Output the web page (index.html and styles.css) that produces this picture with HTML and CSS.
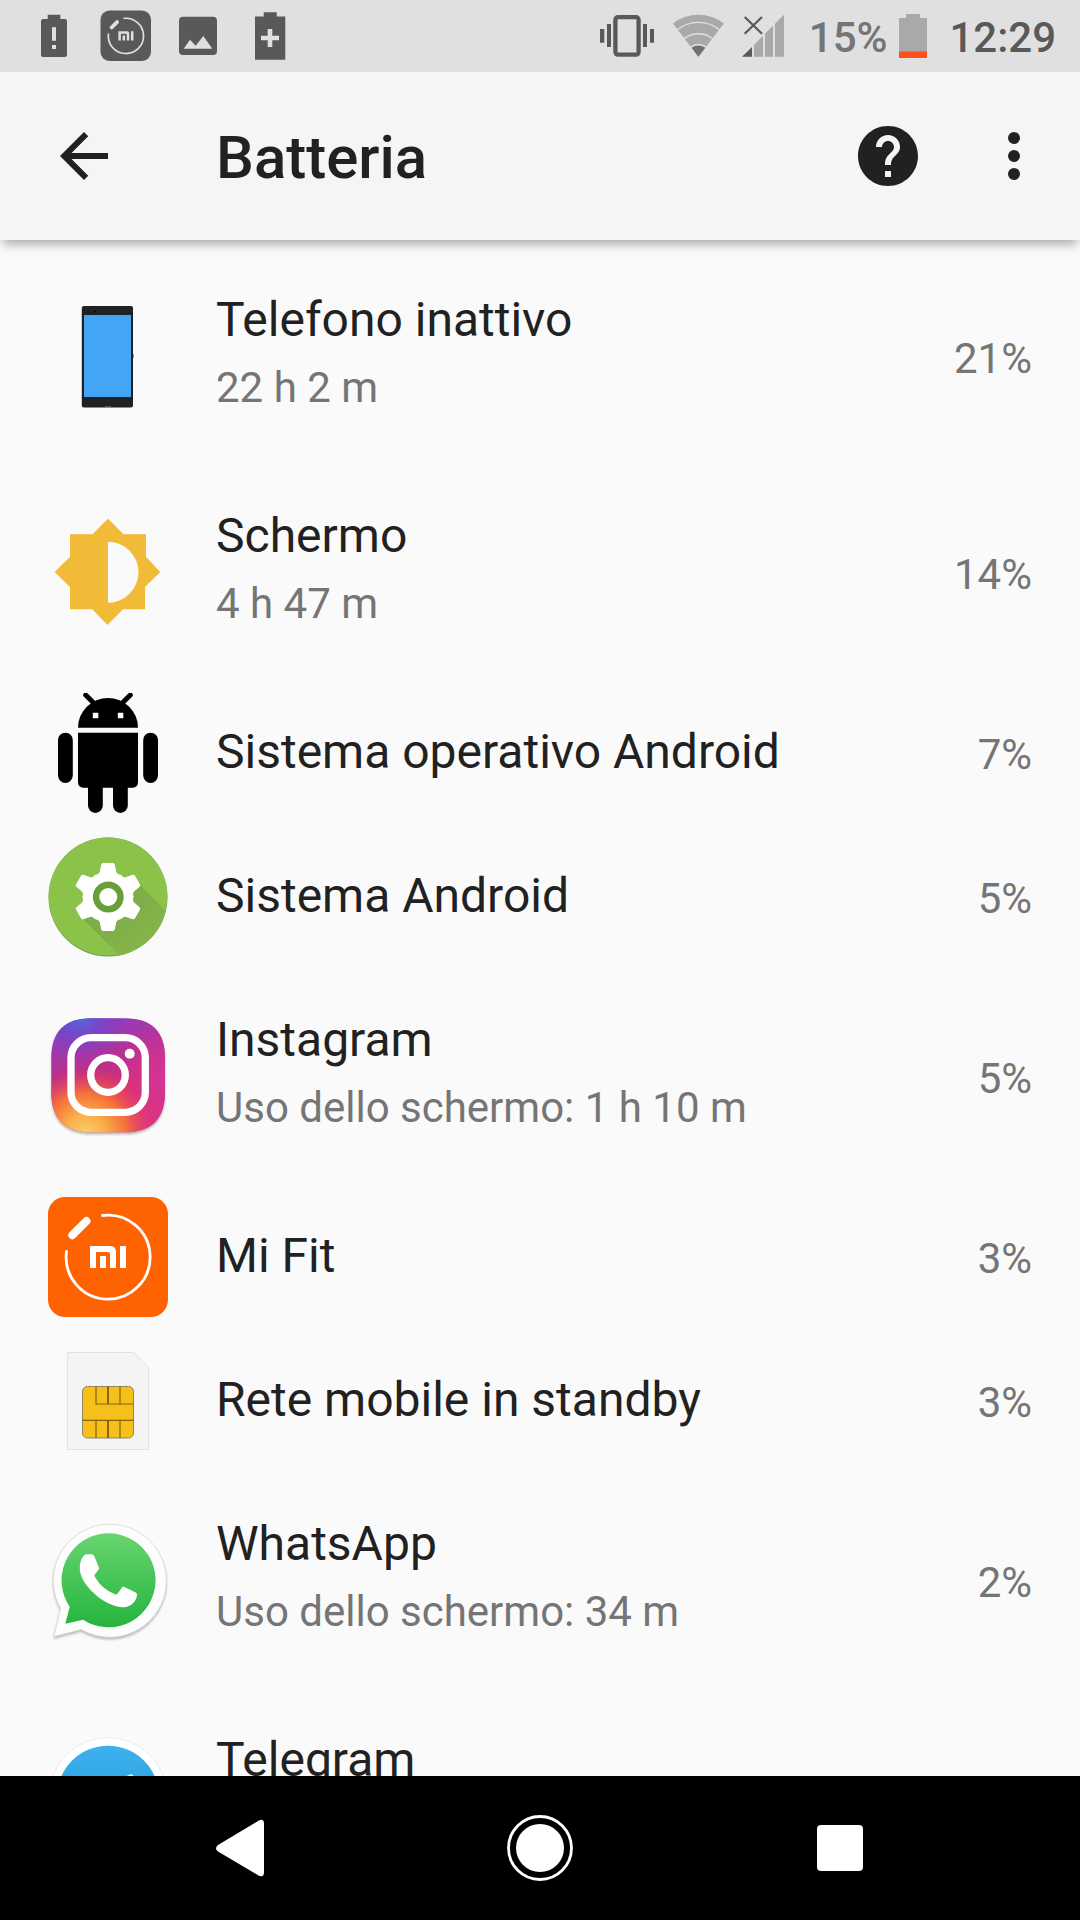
FILE: index.html
```html
<!DOCTYPE html>
<html lang="it">
<head>
    <meta charset="UTF-8">
    <meta name="viewport" content="width=device-width, initial-scale=1.0">
    <title>Batteria</title>
    <link rel="stylesheet" href="styles.css">
</head>
<body>
<div class="status-bar">
    <div class="notifications">
        <svg width="72" height="72" viewBox="0 0 72 72">
            <path fill="#595959" d="M29.7 14.7h12.6V19H47a2 2 0 0 1 2 2v34a2 2 0 0 1-2 2H25a2 2 0 0 1-2-2V21a2 2 0 0 1 2-2h4.7z"/>
            <path fill="#e0e0e0" d="M34 27.3h4v13.4h-4zM34 45h4v4h-4z"/>
        </svg>
        <svg width="72" height="72" viewBox="0 0 72 72">
            <rect x="10.5" y="10.5" width="50.5" height="50.5" rx="9" fill="#595959"/>
            <g transform="translate(10.7 10.7) scale(.42)">
                <path d="M54.3 18.4A42 42 0 1 1 18.4 54.3" fill="none" stroke="#e0e0e0" stroke-width="4"/>
                <path d="M26 40L39 27" stroke="#e0e0e0" stroke-width="9" stroke-linecap="round"/>
                <path fill="#e0e0e0" d="M42 49h21q5 0 5 5v17h-6V57q0-2-2-2H48v16h-6zM52 59h6v12h-6zM72 49h6v22h-6z"/>
            </g>
        </svg>
        <svg width="72" height="72" viewBox="0 0 72 72">
            <rect x="17" y="16.7" width="38" height="38.3" rx="4" fill="#595959"/>
            <path fill="#e0e0e0" d="M21.7 48.8L28 39.7l5.7 6L41.3 36l9 12.8z"/>
        </svg>
        <svg width="72" height="72" viewBox="0 0 72 72">
            <path fill="#595959" d="M21 16.5h8.7v-4.2h13v4.2h8.6v43.2H21z"/>
            <path stroke="#e0e0e0" stroke-width="4.6" d="M27 38h18M36 29v18"/>
        </svg>
    </div>
    <div class="system">
        <div class="signals">
            <svg width="60" height="72" viewBox="0 0 60 72">
                <rect x="18.4" y="17.2" width="23.2" height="37.4" rx="2.5" fill="none" stroke="#595959" stroke-width="4.3"/>
                <path fill="#595959" d="M3 29h4.3v13.7H3zM10 24h4v23h-4zM46 24h4v23h-4zM53 29h4v13.7h-4z"/>
            </svg>
            <svg width="60" height="72" viewBox="0 0 60 72">
                <path fill="#a9a9a9" d="M29.4 56.8L3.9 23.4a42.3 42.3 0 0 1 51 0z"/>
                <path fill="#707070" d="M29.4 56.8l-6.8-9a11.5 11.5 0 0 1 13.6 0z"/>
                <g fill="none" stroke="#e0e0e0" stroke-width="1.4">
                    <path d="M8 30a34 34 0 0 1 42.8 0"/>
                    <path d="M15 38.8a23 23 0 0 1 28.8 0"/>
                    <path d="M21.6 47.3a12.5 12.5 0 0 1 15.6 0"/>
                </g>
            </svg>
            <svg width="60" height="72" viewBox="0 0 60 72">
                <path fill="#595959" d="M1 56.8l10-9.8v9.8z"/>
                <path fill="#a9a9a9" d="M13 56.8V45l9-9.3v21.1zM24 56.8V33.7l8-7.9v31zM34 56.8v-33l9-9v42z"/>
                <path stroke="#595959" stroke-width="2.2" d="M3.7 17L21 33.8M21 17L3.7 33.8"/>
            </svg>
        </div>
        <span class="level">15%</span>
        <svg width="36" height="72" viewBox="0 0 36 72">
            <path fill="#a9a9a9" d="M4 18h7v-4h14v4h7v34H4z"/>
            <path fill="#fa5019" d="M4 51.5h28V58H4z"/>
        </svg>
        <time class="clock" datetime="12:29">12:29</time>
    </div>
</div>

<header class="toolbar">
    <button class="icon-btn" type="button" aria-label="Indietro">
        <svg width="72" height="72" viewBox="0 0 24 24"><path d="M20 11H7.83l5.59-5.59L12 4l-8 8 8 8 1.41-1.41L7.83 13H20z"/></svg>
    </button>
    <h1>Batteria</h1>
    <button class="icon-btn" type="button" aria-label="Guida">
        <svg width="72" height="72" viewBox="0 0 24 24"><path d="M12 2C6.48 2 2 6.48 2 12s4.48 10 10 10 10-4.48 10-10S17.52 2 12 2zm1 17h-2v-2h2zm2.07-7.75l-.9.92C13.45 12.9 13 13.5 13 15h-2v-.5c0-1.1.45-2.1 1.17-2.83l1.24-1.26c.37-.36.59-.86.59-1.41 0-1.1-.9-2-2-2s-2 .9-2 2H8c0-2.21 1.79-4 4-4s4 1.79 4 4c0 .88-.36 1.68-.93 2.25z"/></svg>
    </button>
    <button class="icon-btn" type="button" aria-label="Altre opzioni">
        <svg width="72" height="72" viewBox="0 0 24 24"><circle cx="12" cy="6" r="2"/><circle cx="12" cy="12" r="2"/><circle cx="12" cy="18" r="2"/></svg>
    </button>
</header>

<main class="content">
    <ul class="usage">
        <li>
            <a class="row tall" href="#telefono">
                <svg class="icon" viewBox="0 0 120 120">
                    <rect x="33.8" y="9" width="51.2" height="101.5" rx="2" fill="#212121"/>
                    <rect x="36" y="18" width="47" height="82" fill="#42a5f5"/>
                    <path d="M85 57h.6v4H85z" fill="#555"/>
                    <circle cx="47" cy="14.5" r="1" fill="#000"/>
                    <path d="M57 109.5h6" stroke="#555"/>
                </svg>
                <span class="text"><span class="name">Telefono inattivo</span><span class="detail">22 h 2 m</span></span>
                <span class="percent">21%</span>
            </a>
        </li>
        <li>
            <a class="row tall" href="#schermo">
                <svg class="icon" viewBox="0 0 120 120">
                    <path fill="#f2bb37" fill-rule="evenodd" d="M60 5.7l15.6 15.6H98v22.4L112.3 59 97 74v22.3H75L59.5 112 44.3 96.3H22V74L6.7 59 22 43.7V21.3h22.4zM60 28.7v61a30.3 30.3 0 0 0 0-61z"/>
                </svg>
                <span class="text"><span class="name">Schermo</span><span class="detail">4 h 47 m</span></span>
                <span class="percent">14%</span>
            </a>
        </li>
        <li>
            <a class="row" href="#sistema-operativo">
                <svg class="icon" viewBox="0 0 120 120">
                    <path d="M30 34.7a30 29.7 0 0 1 60 0z"/>
                    <path d="M37.7 2l8 8M82.3 2l-8 8" stroke="#000" stroke-width="5" stroke-linecap="round"/>
                    <path d="M30 39.7h60v50a5 5 0 0 1-5 5H35a5 5 0 0 1-5-5z"/>
                    <rect x="10" y="39.7" width="14.8" height="50.3" rx="7.4"/>
                    <rect x="95.2" y="39.7" width="14.8" height="50.3" rx="7.4"/>
                    <rect x="40" y="80" width="14.8" height="40" rx="7.4"/>
                    <rect x="65" y="80" width="14.8" height="40" rx="7.4"/>
                    <path fill="#fff" d="M44.8 19.7h5.5v5.5h-5.5zM69.8 19.7h5.5v5.5h-5.5z"/>
                </svg>
                <span class="text"><span class="name">Sistema operativo Android</span></span>
                <span class="percent">7%</span>
            </a>
        </li>
        <li>
            <a class="row" href="#sistema">
                <svg class="icon" viewBox="0 0 120 120">
                    <defs>
                        <clipPath id="disc"><circle cx="60" cy="60" r="59.5"/></clipPath>
                        <linearGradient id="cast" x1="0" y1="0" x2="1" y2="1">
                            <stop offset=".4" stop-color="#7fad48"/>
                            <stop offset="1" stop-color="#87b94a"/>
                        </linearGradient>
                        <path id="tooth" d="M46 38.500Q50.500 37.500 51.700 35l1.500-7.500q.3-1.500 2-1.500h9.600q1.700 0 2 1.500l1.500 7.500q1.200 2.500 5.700 3.500L60 60z"/>
                    </defs>
                    <circle cx="60" cy="60" r="59.5" fill="#6f9c3b"/>
                    <g clip-path="url(#disc)">
                        <circle cx="60" cy="59" r="59.5" fill="#8bc34a"/>
                        <path d="M35 82l37 37h48V76L91 47z" fill="url(#cast)"/>
                    </g>
                    <g fill="#fff">
                        <circle cx="60" cy="60" r="25"/>
                        <use href="#tooth"/>
                        <use href="#tooth" transform="rotate(60 60 60)"/>
                        <use href="#tooth" transform="rotate(120 60 60)"/>
                        <use href="#tooth" transform="rotate(180 60 60)"/>
                        <use href="#tooth" transform="rotate(240 60 60)"/>
                        <use href="#tooth" transform="rotate(300 60 60)"/>
                    </g>
                    <circle cx="60.3" cy="60" r="12.2" fill="#fff" stroke="#689f38" stroke-width="6.4"/>
                </svg>
                <span class="text"><span class="name">Sistema Android</span></span>
                <span class="percent">5%</span>
            </a>
        </li>
        <li>
            <a class="row tall" href="#instagram">
                <svg class="icon shadow" viewBox="0 0 120 120">
                    <defs>
                        <linearGradient id="ig-base" x1=".3" y1="0" x2=".6" y2="1">
                            <stop offset="0" stop-color="#8a3fc8"/>
                            <stop offset=".4" stop-color="#b8308c"/>
                            <stop offset=".7" stop-color="#e02f68"/>
                            <stop offset="1" stop-color="#dd3480"/>
                        </linearGradient>
                        <radialGradient id="ig-blue" cx=".25" cy="-.04" r=".45">
                            <stop offset="0" stop-color="#4a72e0"/>
                            <stop offset=".5" stop-color="#6a48cc" stop-opacity=".6"/>
                            <stop offset="1" stop-color="#8a3ac8" stop-opacity="0"/>
                        </radialGradient>
                        <radialGradient id="ig-pink" cx="1" cy=".5" r=".5">
                            <stop offset="0" stop-color="#d0359e" stop-opacity=".9"/>
                            <stop offset="1" stop-color="#d0359e" stop-opacity="0"/>
                        </radialGradient>
                        <radialGradient id="ig-warm" cx=".3" cy="1.02" r=".6">
                            <stop offset="0" stop-color="#fbd070"/>
                            <stop offset=".3" stop-color="#fbae48"/>
                            <stop offset=".6" stop-color="#f97a35" stop-opacity=".9"/>
                            <stop offset="1" stop-color="#e83a58" stop-opacity="0"/>
                        </radialGradient>
                        <path id="ig-shape" d="M43 1.3h34.5C104 1.3 117 15 117 41v34.5c0 26-13 39.8-39.5 39.8H43c-26.5 0-39.7-13.8-39.7-39.8V41C3.3 15 16.5 1.3 43 1.3z"/>
                    </defs>
                    <use href="#ig-shape" fill="url(#ig-base)"/>
                    <use href="#ig-shape" fill="url(#ig-pink)"/>
                    <use href="#ig-shape" fill="url(#ig-blue)"/>
                    <use href="#ig-shape" fill="url(#ig-warm)"/>
                    <rect x="23" y="20.7" width="74.3" height="74.6" rx="20" fill="none" stroke="#fff" stroke-width="7.3"/>
                    <circle cx="60" cy="58" r="17.3" fill="none" stroke="#fff" stroke-width="7.3"/>
                    <circle cx="81.7" cy="36.7" r="5" fill="#fff"/>
                </svg>
                <span class="text"><span class="name">Instagram</span><span class="detail">Uso dello schermo: 1 h 10 m</span></span>
                <span class="percent">5%</span>
            </a>
        </li>
        <li>
            <a class="row" href="#mi-fit">
                <svg class="icon" viewBox="0 0 120 120">
                    <rect width="120" height="120" rx="17" fill="#ff6200"/>
                    <path d="M54.5 18.5A42 42 0 1 1 18.5 54.5" fill="none" stroke="#fff" stroke-width="2.8" stroke-linecap="round"/>
                    <path d="M24.3 38.2L38.5 24" stroke="#fff" stroke-width="8" stroke-linecap="round"/>
                    <path fill="#fff" d="M42 49h20q6 0 6 6v16h-6V57q0-2-2-2H48v16h-6zM52 59h6v12h-6zM72 49h6v22h-6z"/>
                </svg>
                <span class="text"><span class="name">Mi Fit</span></span>
                <span class="percent">3%</span>
            </a>
        </li>
        <li>
            <a class="row" href="#rete-mobile">
                <svg class="icon" viewBox="0 0 120 120">
                    <path d="M19.5 11.5H86l14.500 15v82h-81z" fill="#f4f4f4" stroke="#e2e2e2"/>
                    <rect x="34.5" y="45.5" width="51" height="51.5" rx="5" fill="#f6bf1a" stroke="#8c8460"/>
                    <path d="M48 45.5V63h37.5M34.5 79.3h51M48 79.3V97M72 45.5V63M72 79.3V97" fill="none" stroke="#83640c" stroke-width="1.2"/>
                    <path d="M60 45.5V63M60 79.3V97" stroke="#83640c" stroke-width="1.9"/>
                </svg>
                <span class="text"><span class="name">Rete mobile in standby</span></span>
                <span class="percent">3%</span>
            </a>
        </li>
        <li>
            <a class="row tall" href="#whatsapp">
                <svg class="icon shadow" viewBox="0 0 120 120">
                    <defs>
                        <linearGradient id="wa" x1="0" y1="0" x2="0" y2="1">
                            <stop offset="0" stop-color="#67d56f"/>
                            <stop offset="1" stop-color="#26b43e"/>
                        </linearGradient>
                    </defs>
                    <path d="M6 115.500l6.500-28.200A56.500 56.500 0 1 1 33.300 108.500z" fill="#fdfdfd" stroke="#d8d8d8" stroke-width=".8"/>
                    <path d="M17.300 102.700l4.400-17A47 47 0 1 1 35 98.700z" fill="url(#wa)"/>
                    <path fill="#fff" d="M39 33.300h4.500q2 0 2.800 2l4.500 11q.6 1.200-.2 2.300l-3.600 4.700q-1 1.200-.2 2.500Q54 68.500 67 73.300q1.500.5 2.500-.6l4.300-6q1-1.300 2.600-.7l11.200 5.400q1.400.7 1.400 2c0 8-8 13.200-15.300 12.900C55 84 36 66 32.500 52.500 30.800 45 32.300 38 36.500 34q1-.7 2.500-.7z"/>
                </svg>
                <span class="text"><span class="name">WhatsApp</span><span class="detail">Uso dello schermo: 34 m</span></span>
                <span class="percent">2%</span>
            </a>
        </li>
        <li>
            <a class="row tall" href="#telegram">
                <svg class="icon" viewBox="0 0 120 120">
                    <defs>
                        <linearGradient id="tg" x1="0" y1="0" x2="0" y2="1">
                            <stop offset="0" stop-color="#3db1ee"/>
                            <stop offset="1" stop-color="#1c93d2"/>
                        </linearGradient>
                    </defs>
                    <circle cx="60" cy="59" r="58.4" fill="#fff" stroke="#ececec"/>
                    <circle cx="60" cy="59.5" r="50.8" fill="url(#tg)"/>
                    <path fill="#fff" d="M82 37.500q4-1 3.500 3.500l-8 39q-1 4-5 2L60 73l-6 6q-2 2-2.500-1L49 67l-14-4.500q-4-2 0-4z"/>
                </svg>
                <span class="text"><span class="name">Telegram</span></span>
            </a>
        </li>
    </ul>
</main>

<nav class="nav-bar">
    <button type="button" aria-label="Indietro">
        <svg width="72" height="72" viewBox="0 0 72 72"><path d="M14 33L54.500 8.700Q60 6 60 12v48q0 6-5.500 3.500L14 39.500q-4-3 0-6.500z"/></svg>
    </button>
    <button type="button" aria-label="Home">
        <svg width="72" height="72" viewBox="0 0 72 72"><circle cx="36" cy="36" r="24"/><circle cx="36" cy="36" r="31.5" fill="none" stroke="#fff" stroke-width="2.8"/></svg>
    </button>
    <button type="button" aria-label="Recenti">
        <svg width="72" height="72" viewBox="0 0 72 72"><rect x="13" y="13" width="46" height="46" rx="4"/></svg>
    </button>
</nav>
</body>
</html>
```

FILE: styles.css
```css
:root {
    --bg: #fafafa;
    --bar: #f5f5f5;
    --text: #212121;
    --muted: #757575;
    --status: #e0e0e0;
}
* { box-sizing: border-box; }
body {
    margin: 0;
    height: 100vh;
    display: flex;
    flex-direction: column;
    font-family: Roboto, "Noto Sans", sans-serif;
    background: var(--bg);
    color: var(--text);
}
svg { display: block; flex: none; }
button { border: none; background: none; padding: 0; cursor: pointer; }

/* -------- Status bar -------- */
.status-bar {
    flex: none;
    height: 72px;
    display: flex;
    justify-content: space-between;
    padding: 0 24px 0 18px;
    background: var(--status);
    font-size: 42px;
    font-weight: 500;
    line-height: 76px;
}
.notifications { display: flex; }
.system { display: flex; gap: 8px; }
.signals { display: flex; gap: 12px; }
.level { color: #757575; }
.clock { color: #595959; padding-left: 10px; }

/* -------- Toolbar -------- */
.toolbar {
    flex: none;
    height: 168px;
    display: flex;
    align-items: center;
    gap: 54px;
    padding: 0 30px 0 48px;
    background: var(--bar);
    box-shadow: 0 7px 10px -3px rgba(0,0,0,0.33);
    z-index: 1;
}
.toolbar h1 {
    flex: 1;
    margin: 0;
    padding: 4px 0 0 42px;
    font-size: 60px;
    font-weight: 500;
    line-height: 72px;
}
.icon-btn { fill: var(--text); }

/* -------- App list -------- */
.content { flex: 1; min-height: 0; overflow: hidden; }
.usage { list-style: none; margin: 0; padding: 9px 0 0; }
.row {
    display: flex;
    align-items: center;
    gap: 48px;
    min-height: 144px;
    padding: 0 48px;
    color: var(--text);
    text-decoration: none;
}
.icon { width: 120px; height: 120px; }
.shadow { overflow: visible; filter: drop-shadow(0 2px 1px rgba(0,0,0,0.25)); }
.text { flex: 1; display: flex; flex-direction: column; padding-bottom: 2px; }
.name { font-size: 48px; line-height: 62px; }
.detail { font-size: 42px; line-height: 74px; color: var(--muted); }
.percent { font-size: 42px; line-height: 62px; padding-top: 4px; color: var(--muted); }
.tall { min-height: 216px; }
.tall .text { min-height: 136px; padding-bottom: 0; }

/* -------- Navigation -------- */
.nav-bar {
    flex: none;
    height: 144px;
    display: grid;
    grid-template-columns: repeat(3, 1fr);
    padding: 0 90px;
    background: #000;
    fill: #fff;
}
.nav-bar button { display: grid; place-items: center; fill: #fff; }
```
